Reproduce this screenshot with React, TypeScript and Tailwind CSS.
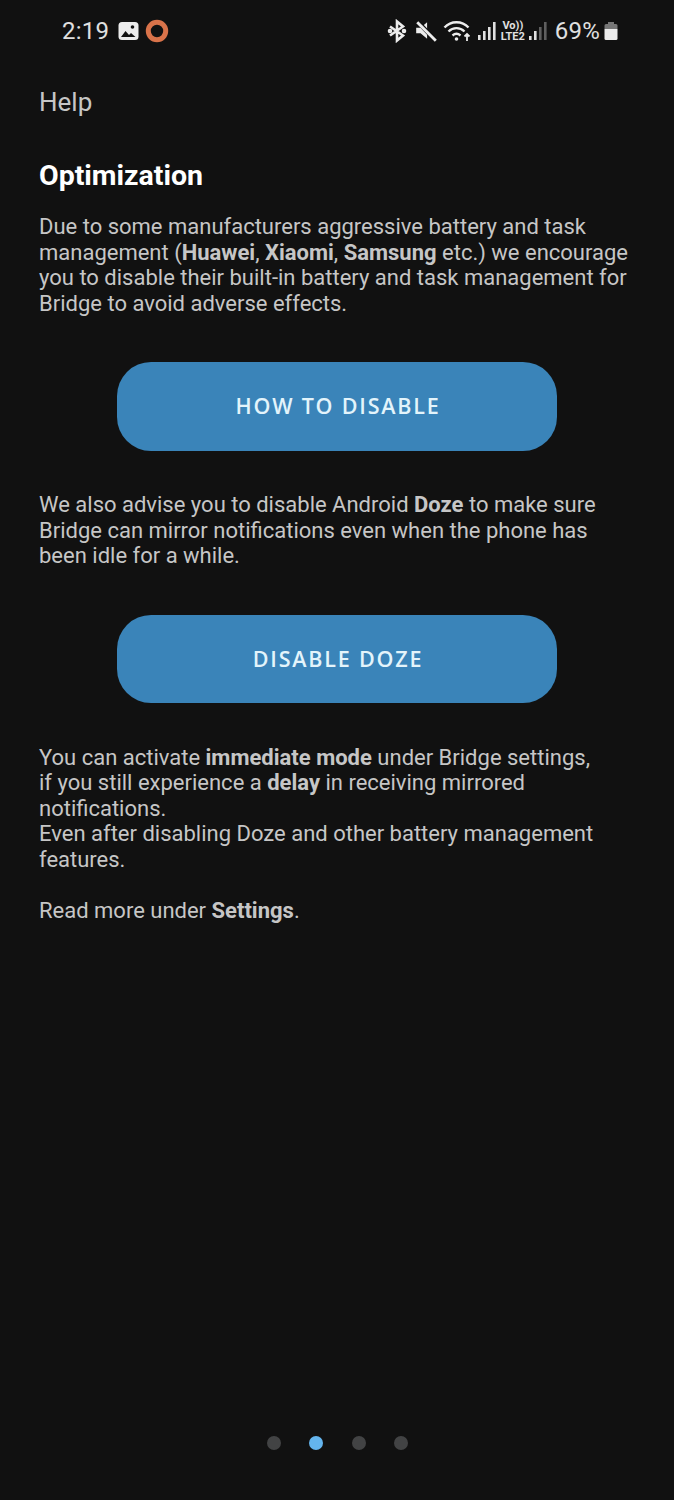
import React from "react";

function Bars({ h, dim, className }: { h: number[]; dim?: boolean[]; className?: string }) {
  return (
    <svg className={className} width="22" height="22" viewBox="0 0 22 22">
      {h.map((v, i) => (
        <rect key={i} x={2 + i * 5} y={20 - v} width="2.6" height={v} fill={dim && dim[i] ? "#5f5f5f" : "#e0e0e0"} />
      ))}
    </svg>
  );
}

function ActionButton({ label }: { label: string }) {
  return (
    <div className="mx-auto flex h-[88.5px] w-[440px] items-center justify-center rounded-[34px] bg-[#3a84b9] pl-[2px] text-[21.5px] font-semibold tracking-[1.8px] text-[#e3f4fb] [font-family:'Open_Sans',sans-serif]">
      {label}
    </div>
  );
}

export default function App() {
  return (
    <div className="flex h-[1500px] w-[674px] flex-col bg-[#111111] text-[#c6c6c6] [font-family:Roboto,sans-serif]">
      <div className="flex h-[60px] items-center justify-between pl-[62px] pr-[56px] pt-[1px]">
        <div className="flex items-center">
          <span className="text-[24px] tracking-[0.2px] text-[#e0e0e0]">2:19</span>
          <svg className="ml-[9px]" width="21" height="20" viewBox="0 0 21 20">
            <rect x="0.5" y="1" width="20" height="18" rx="3.5" fill="#ececec" />
            <circle cx="14.5" cy="6" r="1.8" fill="#111111" />
            <path d="M3 16l4.5-6 3.500 4 2-2 4.500 4z" fill="#111111" />
          </svg>
          <svg className="ml-[6px]" width="24" height="24" viewBox="0 0 24 24">
            <circle cx="12" cy="12" r="8.7" fill="none" stroke="#d9734a" strokeWidth="5" />
          </svg>
        </div>
        <div className="flex items-center">
          <svg width="20" height="24" viewBox="0 0 20 22" fill="none" stroke="#ececec" strokeWidth="2.600">
            <path d="M3 6.500l13 9-6 5V1.500l6 5-13 9" />
            <circle cx="3" cy="11" r="1" fill="#ececec" />
            <circle cx="17" cy="11" r="1" fill="#ececec" />
          </svg>
          <svg className="ml-[7px]" width="24" height="24" viewBox="0 0 22 22">
            <path d="M2 8h4l6-5v15l-6-5H2z" fill="#ececec" />
            <path d="M3 2l17 18" stroke="#111111" strokeWidth="4" />
            <path d="M3 3l17 17" stroke="#ececec" strokeWidth="2.600" />
          </svg>
          <svg className="ml-[5px]" width="30" height="24" viewBox="0 0 30 24" fill="none" stroke="#ececec" strokeWidth="2.400">
            <path d="M1.500 8.500C8 1.500 19 1.500 25.500 8.500" />
            <path d="M5.500 12.500C10 8 17 8 21.500 12.500" />
            <path d="M9.500 16.500C12 14.300 15 14.300 17.500 16.500" />
            <circle cx="13.500" cy="20" r="1.800" fill="#ececec" stroke="none" />
            <path d="M24 22v-7M21.500 17.500L24 15l2.500 2.500" strokeWidth="1.800" />
          </svg>
          <Bars className="ml-[3px]" h={[5, 9, 13, 18]} />
          <div className="ml-[2px] flex w-[26px] flex-col items-center text-[11px] font-bold leading-[11px] text-[#e0e0e0]">
            <span>Vo))</span>
            <span>LTE2</span>
          </div>
          <Bars className="ml-[1px]" h={[4, 9, 13, 18]} dim={[false, false, true, true]} />
          <span className="ml-[6px] text-[24px] tracking-[0.2px] text-[#e0e0e0]">69%</span>
          <svg className="ml-[4px]" width="14" height="20" viewBox="0 0 14 20">
            <path d="M4 1h6v2h2a1.500 1.500 0 011.500 1.500V8H.5V4.500A1.500 1.500 0 012 3h2z" fill="#777" />
            <path d="M.5 8h13v9.500A1.500 1.500 0 0112 19H2a1.500 1.500 0 01-1.500-1.500z" fill="#ececec" />
          </svg>
        </div>
      </div>

      <div className="px-[39px]">
        <h2 className="mt-[25px] text-[26px] leading-[34px] text-[#c6c6c6]">Help</h2>
        <h1 className="mt-[40px] text-[28.5px] font-bold leading-[34px] text-white">Optimization</h1>

        <p className="mt-[21px] text-[22px] leading-[25.5px]">
          Due to some manufacturers aggressive battery and task
          <br />
          management (<b>Huawei</b>, <b>Xiaomi</b>, <b>Samsung</b> etc.) we encourage
          <br />
          you to disable their built-in battery and task management for
          <br />
          Bridge to avoid adverse effects.
        </p>
      </div>

      <div className="mt-[46px]">
        <ActionButton label="HOW TO DISABLE" />
      </div>

      <p className="mt-[41.5px] px-[39px] text-[22px] leading-[25.5px]">
        We also advise you to disable Android <b>Doze</b> to make sure
        <br />
        Bridge can mirror notifications even when the phone has
        <br />
        been idle for a while.
      </p>

      <div className="mt-[46px]">
        <ActionButton label="DISABLE DOZE" />
      </div>

      <p className="mt-[41.5px] px-[39px] text-[22px] leading-[25.5px]">
        You can activate <b>immediate mode</b> under Bridge settings,
        <br />
        if you still experience a <b>delay</b> in receiving mirrored
        <br />
        notifications.
        <br />
        Even after disabling Doze and other battery management
        <br />
        features.
        <br />
        <br />
        Read more under <b>Settings</b>.
      </p>

      <div className="mt-auto mb-[50px] flex items-center justify-center gap-[28.5px] pl-[1px]">
        <span className="h-[14px] w-[14px] rounded-full bg-[#424344]" />
        <span className="h-[14px] w-[14px] rounded-full bg-[#64b5ee]" />
        <span className="h-[14px] w-[14px] rounded-full bg-[#424344]" />
        <span className="h-[14px] w-[14px] rounded-full bg-[#424344]" />
      </div>
    </div>
  );
}
